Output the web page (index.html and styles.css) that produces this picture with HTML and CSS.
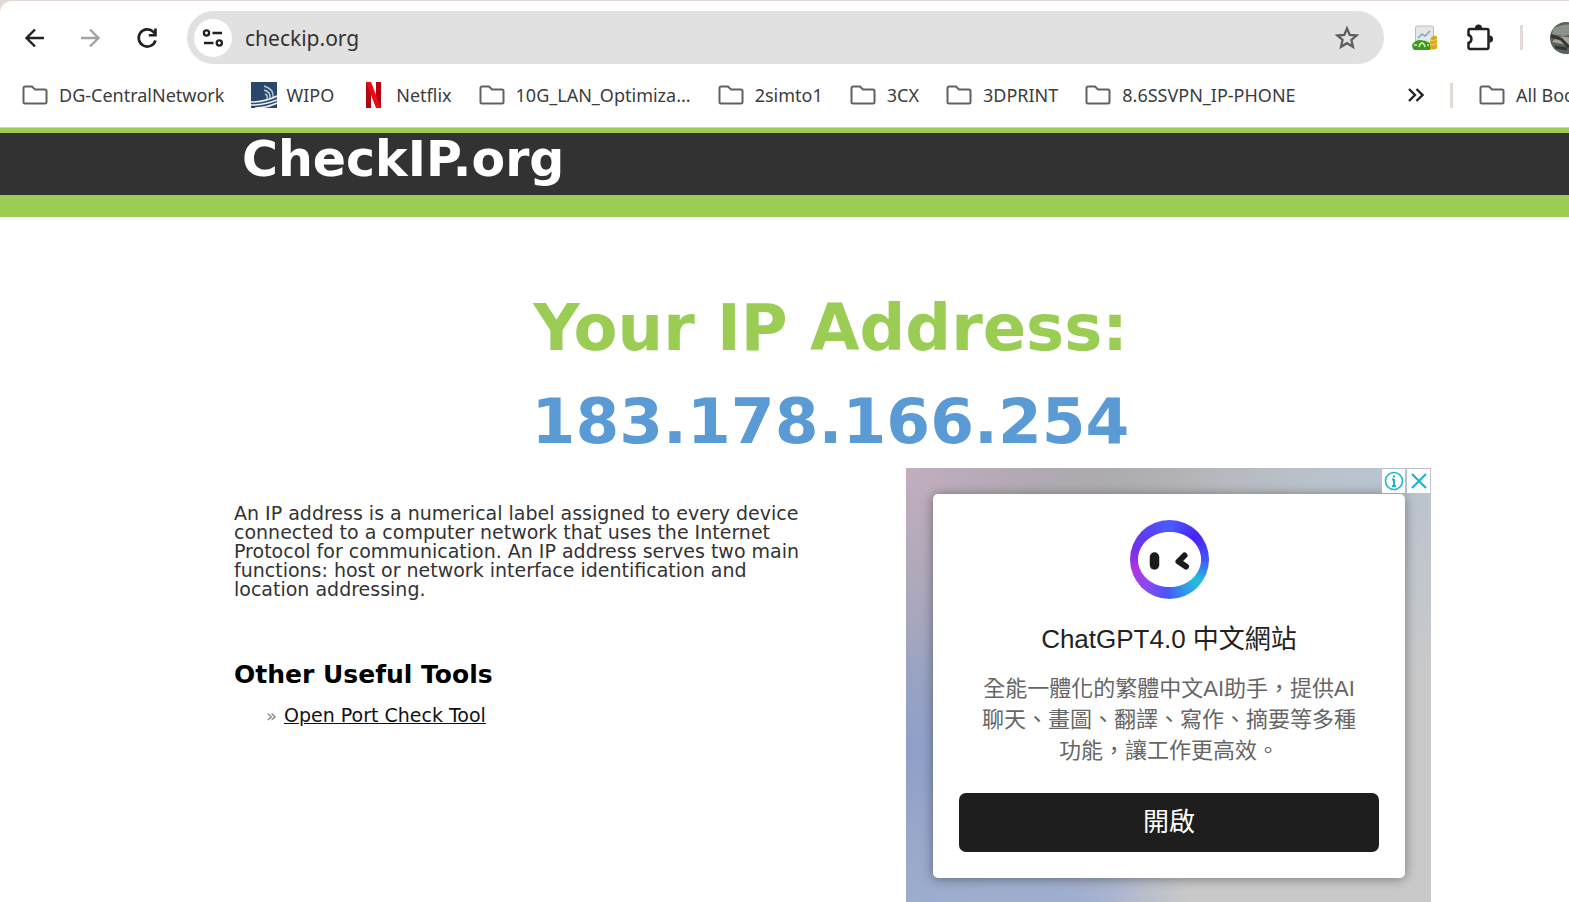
FILE: index.html
```html
<!DOCTYPE html>
<html lang="en">
<head>
    <meta charset="UTF-8">
    <meta name="viewport" content="width=device-width, initial-scale=1.0">
    <title>CheckIP.org</title>
    <link rel="stylesheet" href="styles.css">
</head>
<body>
    <svg class="symbols" aria-hidden="true">
        <symbol id="folder" viewBox="0 0 26 20">
            <path d="M3 1.500h7l3 3h10a1.500 1.500 0 0 1 1.500 1.500v11a1.500 1.500 0 0 1-1.500 1.500H3A1.500 1.500 0 0 1 1.500 17V3A1.500 1.500 0 0 1 3 1.500z" fill="none" stroke="#5f6164" stroke-width="2"/>
        </symbol>
    </svg>

    <div class="browser">
        <div class="tab-strip"></div>
        <div class="toolbar">
            <div class="nav-buttons">
                <button type="button" aria-label="Back">
                    <svg width="24" height="24" viewBox="0 0 24 24"><path d="M21 12H4M12 3.500L3.500 12l8.500 8.500" fill="none" stroke="#202124" stroke-width="2.400"/></svg>
                </button>
                <button type="button" aria-label="Forward">
                    <svg width="24" height="24" viewBox="0 0 24 24"><path d="M2 12h17M11 3.500l8.500 8.500-8.500 8.500" fill="none" stroke="#a2a2a2" stroke-width="2.400"/></svg>
                </button>
                <button type="button" aria-label="Reload">
                    <svg width="24" height="24" viewBox="0 0 24 24"><path d="M20.500 14.500a8.600 8.600 0 1 1-2-8.500l2 2.500M20.500 2.500V9.300H13.800" fill="none" stroke="#202124" stroke-width="2.600"/></svg>
                </button>
            </div>
            <div class="address-bar">
                <button class="site-info" type="button" aria-label="Site information">
                    <svg width="22" height="20" viewBox="0 0 22 20" fill="none" stroke="#202124" stroke-width="2.300"><circle cx="4.500" cy="5" r="2.600"/><path d="M10.500 5H20M2 15h9.500"/><circle cx="17.300" cy="15" r="2.600"/></svg>
                </button>
                <input class="address" type="text" value="checkip.org" aria-label="Address" spellcheck="false">
                <button type="button" aria-label="Bookmark this page">
                    <svg width="26" height="26" viewBox="0 0 26 26"><path d="M13 3.500l2.700 6.400 6.900.6-5.200 4.500 1.600 6.800-6-3.600-6 3.600 1.600-6.800-5.200-4.500 6.900-.6z" fill="none" stroke="#5c5e61" stroke-width="2.300"/></svg>
                </button>
            </div>
            <div class="extensions">
                <button type="button" aria-label="Page analytics">
                    <svg width="26" height="26" viewBox="0 0 26 26">
                        <rect x="3.500" y="1" width="18" height="20" rx="2" fill="#e4e6e8" stroke="#b9bcbf"/>
                        <path d="M6 13l4-4 3 2 5-5" fill="none" stroke="#7e9fc6" stroke-width="1.500"/>
                        <path d="M19 12.500q3-3 6-1v12l-3 1h-4v-7z" fill="#d9a91c"/>
                        <path d="M18 15l3 1 4-2M17 19l4 1 4-2" fill="none" stroke="#f5d76c"/>
                        <path d="M0 20q3-5 8-5t10 3v7H2q-2-2-2-5z" fill="#3c9a1f"/>
                        <path d="M7 22q1-4 3-4t3 4M2 20h3M15 20h2" fill="none" stroke="#d6f0c5" stroke-width="1.500"/>
                    </svg>
                </button>
                <button type="button" aria-label="Extensions">
                    <svg width="28" height="28" viewBox="0 0 28 28">
                        <path d="M5 5h17a1.500 1.500 0 0 1 1.500 1.500v17A1.500 1.500 0 0 1 22 25H5a1.500 1.500 0 0 1-1.500-1.500V19a4.200 4.200 0 0 0 0-8V6.500A1.500 1.500 0 0 1 5 5z" fill="none" stroke="#202124" stroke-width="2.500"/>
                        <path d="M10 4a3.500 3.500 0 0 1 7 0zM24.500 11.500a3.500 3.500 0 0 1 0 7z" fill="#202124"/>
                    </svg>
                </button>
                <span class="divider"></span>
                <button class="avatar" type="button" aria-label="Profile">
                    <svg width="32" height="32" viewBox="0 0 32 32">
                        <circle cx="16" cy="16" r="16" fill="#5b615b"/>
                        <path d="M3 7Q12 1 24 3l4 8-14 3-12-2z" fill="#8b928c"/>
                        <path d="M2 20q6-7 14-5l14 2-2 7-16-2z" fill="#aaa394"/>
                        <path d="M1 14l10 3 8 8M5 25l12 2" fill="none" stroke="#303832" stroke-width="3"/>
                    </svg>
                </button>
            </div>
        </div>

        <nav class="bookmarks" aria-label="Bookmarks">
            <a class="bookmark" href="#"><svg class="folder"><use href="#folder"/></svg>DG-CentralNetwork</a>
            <a class="bookmark site" href="#">
                <svg width="26" height="26" viewBox="0 0 26 26">
                    <path d="M0 0h26v26H0z" fill="#29476a"/>
                    <path d="M0 20q14 0 26-6M0 23q13 0 26-5M4 26q11 0 22-5" fill="none" stroke="#eef3f7" stroke-width="1.600"/>
                    <path d="M13 4q10 3 9 11M13 8q7 2 6 8M14 12q3 1 2 5" fill="none" stroke="#b9c8d6" stroke-width="1.500"/>
                </svg>WIPO</a>
            <a class="bookmark site" href="#">
                <svg width="26" height="26" viewBox="0 0 26 26">
                    <path d="M5 0h5v26H5zM15 0h5v26h-5z" fill="#b1060f"/>
                    <path d="M5 0h5l10 26h-5z" fill="#ec0a17"/>
                </svg>Netflix</a>
            <a class="bookmark" href="#"><svg class="folder"><use href="#folder"/></svg>10G_LAN_Optimiza...</a>
            <a class="bookmark" href="#"><svg class="folder"><use href="#folder"/></svg>2simto1</a>
            <a class="bookmark" href="#"><svg class="folder"><use href="#folder"/></svg>3CX</a>
            <a class="bookmark" href="#"><svg class="folder"><use href="#folder"/></svg>3DPRINT</a>
            <a class="bookmark" href="#"><svg class="folder"><use href="#folder"/></svg>8.6SSVPN_IP-PHONE</a>
            <div class="bookmarks-end">
                <button type="button" aria-label="More bookmarks">
                    <svg width="16" height="14" viewBox="0 0 16 14"><path d="M1 1l6 6-6 6M8.500 1l6 6-6 6" fill="none" stroke="#202124" stroke-width="2.300"/></svg>
                </button>
                <span class="divider"></span>
                <a class="bookmark" href="#"><svg class="folder"><use href="#folder"/></svg>All Bookmarks</a>
            </div>
        </nav>
    </div>

    <header class="site-header">
        <a class="logo" href="#">CheckIP.org</a>
    </header>

    <main class="content">
        <div class="result">
            <h1>Your IP Address:</h1>
            <p class="ip">183.178.166.254</p>
        </div>

        <div class="columns">
            <section class="info">
                <p>An IP address is a numerical label assigned to every device connected to a computer network that uses the Internet Protocol for communication. An IP address serves two main functions: host or network interface identification and location addressing.</p>
                <h2>Other Useful Tools</h2>
                <ul class="tools">
                    <li><a href="#">Open Port Check Tool</a></li>
                </ul>
            </section>

            <aside class="ad" lang="zh-Hant">
                <div class="ad-choices">
                    <button type="button" aria-label="Ad information">
                        <svg width="20" height="20" viewBox="0 0 20 20"><circle cx="10" cy="10" r="8.500" fill="none" stroke="#1cb4d2" stroke-width="1.600"/><path d="M10 4.500v2M10 8v7M8 8.500h2M8 15h4" stroke="#1cb4d2" stroke-width="2"/></svg>
                    </button>
                    <button type="button" aria-label="Close ad">
                        <svg width="18" height="18" viewBox="0 0 18 18"><path d="M2 2l14 14M16 2L2 16" stroke="#1cb4d2" stroke-width="2.200"/></svg>
                    </button>
                </div>
                <div class="ad-card">
                    <div class="ad-logo">
                        <svg width="50" height="24" viewBox="0 0 50 24"><path d="M10.500 9v8" fill="none" stroke="#1b1b1b" stroke-width="9.500" stroke-linecap="round"/><path d="M40.500 7.500L34.500 13.500l7.500 5" fill="none" stroke="#1b1b1b" stroke-width="6" stroke-linecap="round" stroke-linejoin="round"/></svg>
                    </div>
                    <h3>ChatGPT4.0 中文網站</h3>
                    <p>全能一體化的繁體中文AI助手，提供AI聊天、畫圖、翻譯、寫作、摘要等多種功能，讓工作更高效。</p>
                    <button class="ad-open" type="button">開啟</button>
                </div>
            </aside>
        </div>
    </main>
</body>
</html>
```
FILE: styles.css
```css
* {
    box-sizing: border-box;
}

body {
    margin: 0;
    font-family: "DejaVu Sans", sans-serif;
    background: #fff;
    color: #333;
    overflow-x: hidden;
}

h1, h2, h3, p, ul {
    margin: 0;
    padding: 0;
}

button {
    display: flex;
    flex: none;
    align-items: center;
    justify-content: center;
    padding: 0;
    border: none;
    background: none;
    cursor: pointer;
}

a {
    color: inherit;
    text-decoration: none;
}

svg {
    flex: none;
}

.symbols {
    display: none;
}

/* Browser bars */
.browser {
    background: #e5d9d6;
    border-bottom: 1px solid #d3cfd6;
    overflow: hidden;
    font-family: "Noto Sans", sans-serif;
}

.tab-strip {
    height: 1px;
}

.toolbar {
    display: flex;
    align-items: center;
    gap: 28px;
    height: 73px;
    padding-left: 23px;
    background: #fff;
    border-top-left-radius: 12px;
}

.nav-buttons {
    display: flex;
    gap: 32px;
}

.address-bar {
    flex: 1;
    display: flex;
    align-items: center;
    height: 53px;
    padding: 0 24px 0 7px;
    border-radius: 27px;
    background: #e1e1e1;
}

.site-info {
    width: 38px;
    height: 38px;
    border-radius: 50%;
    background: #fff;
}

.address {
    flex: 1;
    min-width: 0;
    padding: 0 13px;
    border: none;
    outline: none;
    background: none;
    font-family: "Noto Sans", sans-serif;
    font-size: 21px;
    color: #333;
}

.extensions {
    display: flex;
    align-items: center;
    gap: 27px;
}

.divider {
    flex: none;
    width: 3px;
    height: 25px;
    background: #e5d9d6;
}

.avatar {
    margin-right: -13px;
}

.bookmarks {
    display: flex;
    align-items: center;
    gap: 27px;
    height: 53px;
    padding: 0 0 11px 22px;
    background: #fff;
}

.bookmark {
    display: flex;
    flex: none;
    align-items: center;
    gap: 11px;
    font-size: 18px;
    color: #3c3c3c;
    white-space: nowrap;
}

.bookmark.site {
    gap: 9px;
}

.folder {
    width: 26px;
    height: 20px;
}

.bookmarks-end {
    display: flex;
    flex: none;
    align-items: center;
    gap: 26px;
    width: 161px;
    margin-left: auto;
    overflow: hidden;
}

/* Site header */
.site-header {
    padding-left: 242px;
    background: #323232;
    border-top: 5px solid #9bcd55;
    border-bottom: 22px solid #9bcd55;
}

.logo {
    display: block;
    padding-bottom: 8px;
    font-size: 49px;
    font-weight: bold;
    line-height: 54px;
    color: #fff;
}

/* Main content */
.content {
    padding: 65px 138px 0 234px;
}

.result {
    padding-right: 4px;
    text-align: center;
    font-size: 63px;
    font-weight: bold;
    line-height: 93px;
}

.result h1 {
    font-size: 64px;
    color: #9bcd55;
}

.ip {
    color: #5b9bd5;
}

.columns {
    display: flex;
    justify-content: space-between;
    align-items: flex-start;
}

.info {
    width: 580px;
    padding-top: 36px;
    font-size: 19px;
    line-height: 19px;
}

.info h2 {
    margin: 58px 0 13px;
    font-size: 25px;
    line-height: 36px;
    color: #000;
}

.tools {
    padding-left: 32px;
    list-style: none;
}

.tools li::before {
    content: "»";
    margin-right: 7px;
    font-size: 18px;
    color: #888;
}

.tools a {
    color: #111;
    text-decoration: underline;
}

/* Advert */
.ad {
    position: relative;
    width: 525px;
    padding: 26px 26px 24px 27px;
    background:
        radial-gradient(circle at 0 0, #c2afc1 0, transparent 30%),
        radial-gradient(circle at 0 65%, #8f9fca 0, transparent 45%),
        radial-gradient(circle at 5% 100%, #a5b6d2 0, transparent 30%),
        radial-gradient(circle at 30% 105%, #97a8d2 0, transparent 22%),
        radial-gradient(circle at 90% 0, #b9c4d0 0, transparent 35%),
        linear-gradient(to bottom right, #9f9da2, #c9c9c9 60%);
}

.ad-choices {
    position: absolute;
    top: 1px;
    right: 1px;
    display: flex;
    gap: 2px;
}

.ad-choices button {
    width: 23px;
    height: 24px;
    background: #fff;
}

.ad-card {
    display: flex;
    flex-direction: column;
    align-items: center;
    padding: 26px;
    border-radius: 5px;
    background: #fff;
    box-shadow: 0 1px 12px rgba(0, 0, 0, 0.4);
    font-family: "Liberation Sans", "Noto Sans CJK TC", sans-serif;
    text-align: center;
}

.ad-logo {
    display: flex;
    align-items: center;
    justify-content: center;
    width: 79px;
    height: 79px;
    border-radius: 50%;
    background:
        radial-gradient(ellipse 32px 28px at 50% 50%, #fff 97%, transparent 100%),
        conic-gradient(#4a5cff, #4a22f5 50deg, #4255f5 90deg, #22bfdd 125deg, #2f9fe6 150deg, #4656fb 185deg, #8a4af0 220deg, #b135dc 255deg, #7430ec 285deg, #5a40f5 320deg, #4a5cff);
}

.ad-card h3 {
    margin-top: 20px;
    font-size: 26px;
    font-weight: normal;
    line-height: 40px;
    color: #222;
}

.ad-card p {
    margin: 14px 20px 27px;
    font-size: 22px;
    line-height: 31px;
    color: #666;
}

.ad-open {
    width: 100%;
    height: 59px;
    padding-bottom: 6px;
    border-radius: 7px;
    background: #1e1e1e;
    font-family: "Liberation Sans", "Noto Sans CJK TC", sans-serif;
    font-size: 26px;
    color: #fff;
}
```
